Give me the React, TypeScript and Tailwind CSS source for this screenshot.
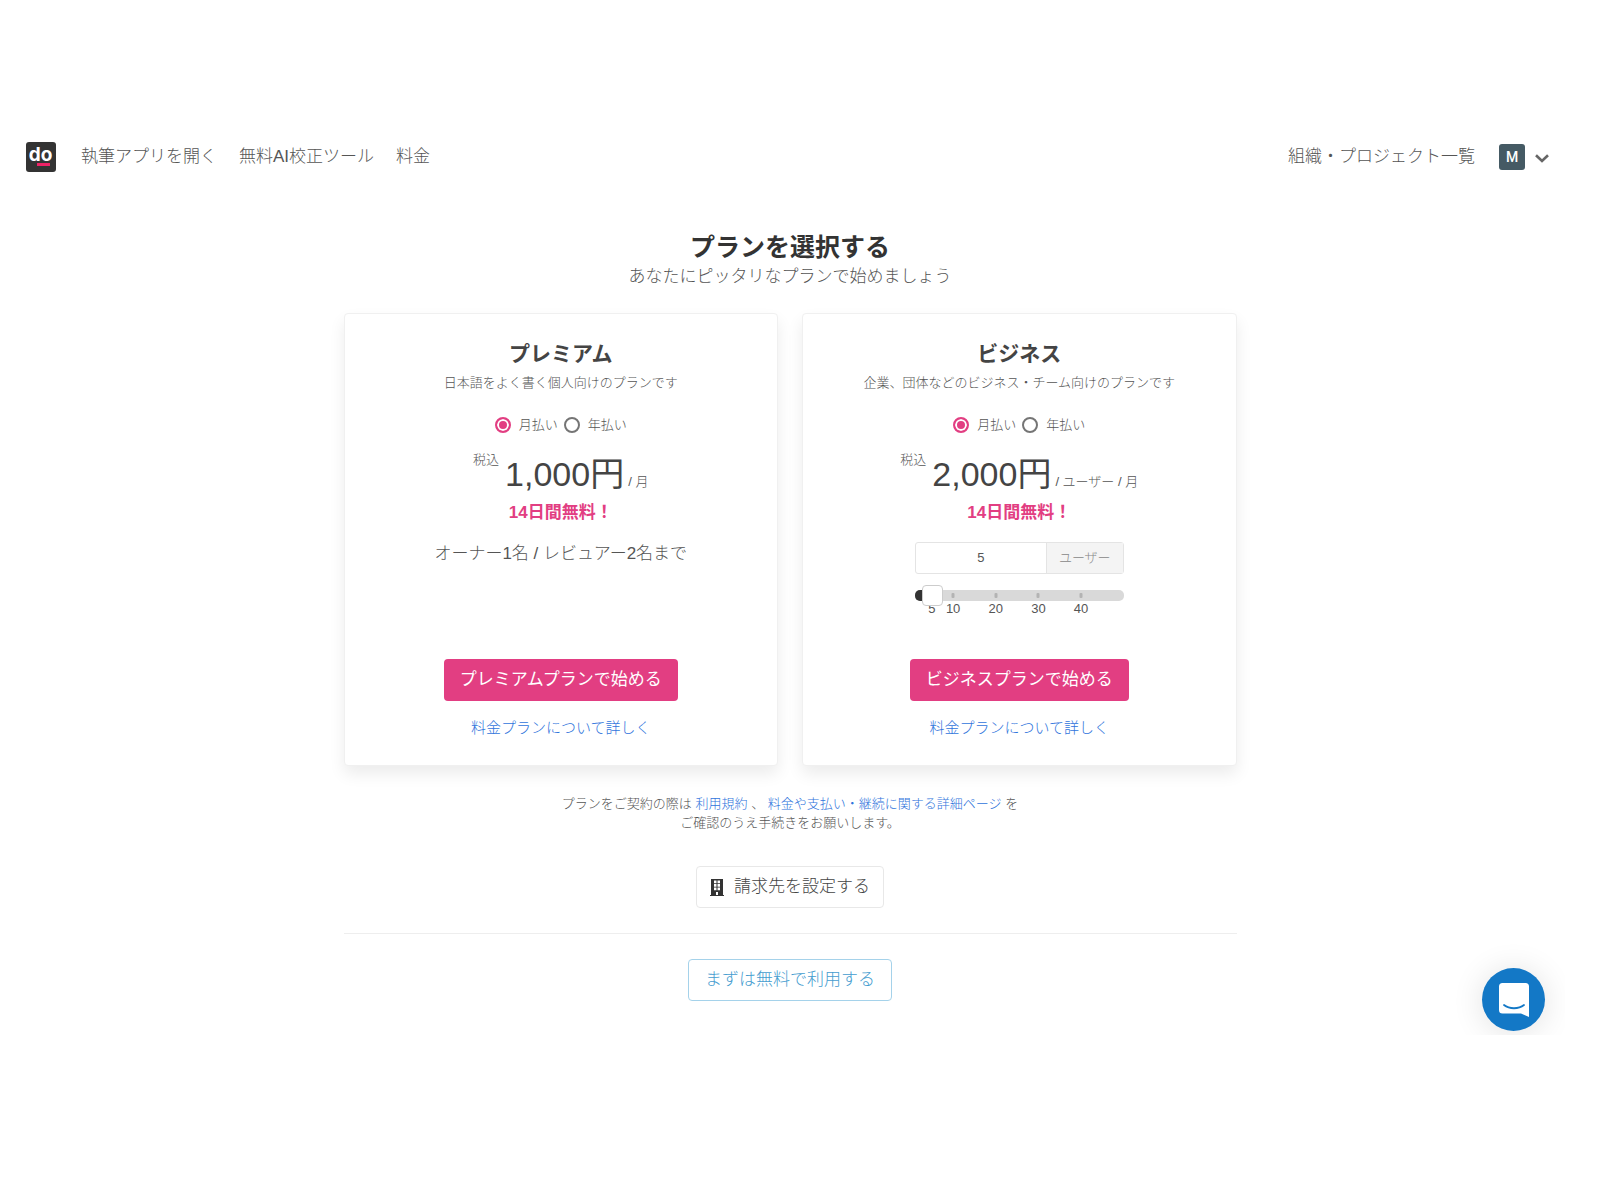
import { useState } from 'react';
import type { ReactNode } from 'react';

const MIN_USERS = 1;
const MAX_USERS = 50;
const TICKS = [10, 20, 30, 40];

function percent(value: number) {
  return `${((value - MIN_USERS) / (MAX_USERS - MIN_USERS)) * 100}%`;
}

function Logo() {
  return (
    <svg viewBox="0 0 30 30" className="size-[30px]" aria-hidden="true">
      <rect width="30" height="30" rx="3" fill="#333333" />
      <text x="14.5" y="19" textAnchor="middle" fontFamily="Inter, sans-serif" fontWeight="700" fontSize="19" fill="#ffffff">
        do
      </text>
      <rect x="11" y="21" width="13" height="3" fill="#ee2266" />
    </svg>
  );
}

function BuildingIcon() {
  return (
    <svg viewBox="0 0 14 17" className="h-[17px] w-[14px]" fill="#333333" aria-hidden="true">
      <path
        fillRule="evenodd"
        d="M1 0h12v16h1v1H0v-1h1zM4 1.500v2.700h2.500V1.500zM7.500 1.500v2.700H10V1.500zM4 5v2.700h2.500V5zM7.500 5v2.700H10V5zM4 8.500v2.700h2.500V8.500zM7.500 8.500v2.700H10V8.500zM6 13v3h2v-3z"
      />
    </svg>
  );
}

function Header() {
  return (
    <header className="flex h-[74px] items-center justify-between pr-[31px] pl-[26px]">
      <nav className="flex items-center gap-[22px]">
        <a href="#home" aria-label="do" className="mr-[3px]">
          <Logo />
        </a>
        <a href="#app">執筆アプリを開く</a>
        <a href="#proofreading">無料AI校正ツール</a>
        <a href="#pricing">料金</a>
      </nav>
      <div className="flex items-center gap-6">
        <a href="#projects">組織・プロジェクト一覧</a>
        <button type="button" aria-label="アカウント" className="flex items-center gap-[10px]">
          <span className="flex size-[26px] items-center justify-center rounded-[3px] bg-[#455a64] font-[Roboto,sans-serif] text-[14px] font-medium text-white">
            M
          </span>
          <svg viewBox="0 0 14 9" className="mt-0.5 h-[9px] w-[14px]" fill="none" stroke="#666666" strokeWidth="2.600" aria-hidden="true">
            <path d="M1 1.200L7 7l6-5.800" />
          </svg>
        </button>
      </div>
    </header>
  );
}

function BillingOptions({ name }: { name: string }) {
  const radio =
    'size-4 appearance-none rounded-full border-2 border-[#757575] bg-white checked:border-[#e23e82] checked:bg-[#e23e82] checked:shadow-[inset_0_0_0_2px_white]';
  return (
    <div className="mt-[22px] flex justify-center gap-[6px] text-[13px] leading-5">
      <label className="flex items-center gap-2">
        <input type="radio" name={name} value="monthly" defaultChecked className={radio} />
        月払い
      </label>
      <label className="flex items-center gap-2">
        <input type="radio" name={name} value="yearly" className={radio} />
        年払い
      </label>
    </div>
  );
}

function UserPicker() {
  const [users, setUsers] = useState(5);

  return (
    <div className="mx-auto w-[209px]">
      <div className="flex h-8 rounded-[3px] border border-[#e4e4e4] text-[13px]">
        <input
          type="text"
          aria-label="ユーザー数"
          value={users}
          onChange={(e) => setUsers(Number(e.target.value) || MIN_USERS)}
          className="min-w-0 flex-1 text-center outline-none"
        />
        <span className="flex w-[77px] items-center justify-center border-l border-[#e4e4e4] bg-[#f4f4f4] text-[#888888]">
          ユーザー
        </span>
      </div>
      <div className="relative mt-4 h-[11px] rounded-[5px] bg-[#d9d9d9]">
        <div className="h-full rounded-l-[5px] bg-[#333333]" style={{ width: percent(users) }} />
        {TICKS.map((tick) => (
          <span
            key={tick}
            className="absolute top-[3px] h-[5px] w-[3px] -translate-x-1/2 rounded-[1px] bg-[#b3b3b3]"
            style={{ left: percent(tick) }}
          />
        ))}
        {[users, ...TICKS].map((value, i) => (
          <span
            key={i}
            className="absolute top-[11px] -translate-x-1/2 text-[13px] leading-4"
            style={{ left: percent(value) }}
          >
            {value}
          </span>
        ))}
        <input
          type="range"
          aria-label="ユーザー数スライダー"
          min={MIN_USERS}
          max={MAX_USERS}
          value={users}
          onChange={(e) => setUsers(Number(e.target.value))}
          className="absolute -top-[5px] -left-[10px] h-[21px] w-[229px] cursor-pointer appearance-none bg-transparent [&::-webkit-slider-thumb]:size-[21px] [&::-webkit-slider-thumb]:appearance-none [&::-webkit-slider-thumb]:rounded-[4px] [&::-webkit-slider-thumb]:border [&::-webkit-slider-thumb]:border-[#cccccc] [&::-webkit-slider-thumb]:bg-white"
        />
      </div>
    </div>
  );
}

interface PlanCardProps {
  id: string;
  title: string;
  description: string;
  price: string;
  unit: string;
  children: ReactNode;
}

function PlanCard({ id, title, description, price, unit, children }: PlanCardProps) {
  return (
    <section className="flex min-h-[453px] flex-1 flex-col items-stretch rounded-[4px] border border-[#f0f0f0] bg-white pt-6 pb-[26px] text-center shadow-[0_8px_16px_rgba(10,10,10,0.08)]">
      <h2 className="text-[21px] leading-8 font-bold text-[#444444]">{title}</h2>
      <p className="mt-[3px] text-[13px] leading-5">{description}</p>
      <BillingOptions name={`${id}-billing`} />
      <div className="mt-[15px] flex items-baseline justify-center">
        <span className="mr-[6px] self-start text-[13px] leading-5">税込</span>
        <span className="text-[34px] leading-[48px] font-normal text-[#444444]">{price}</span>
        <span className="ml-1 text-[13px]">{unit}</span>
      </div>
      <p className="mt-[3px] leading-6 font-bold text-[#e23e82]">14日間無料！</p>
      <div className="mt-[17px] flex-1">{children}</div>
      <div>
        <button type="button" className="h-[42px] rounded-[4px] bg-[#e23e82] px-4 font-normal text-white">
          {title}プランで始める
        </button>
      </div>
      <a href="#plans" className="mx-auto mt-4 text-[15px] leading-[22px] text-[#2f74dc]">
        料金プランについて詳しく
      </a>
    </section>
  );
}

function ChatLauncher() {
  return (
    <div className="fixed right-[35px] bottom-[165px] overflow-hidden pt-10 pr-5 pb-1 pl-10">
      <button
        type="button"
        aria-label="チャットを開く"
        className="flex size-[63px] items-center justify-center rounded-full bg-[#1378c6] shadow-[0_2px_32px_rgba(0,0,0,0.12)]"
      >
        <svg viewBox="0 0 30 34" className="h-[34px] w-[30px]" aria-hidden="true">
          <path d="M3.500 0h23A3.500 3.500 0 0 1 30 3.500V34l-8-3.500H3.500A3.500 3.500 0 0 1 0 27V3.500A3.500 3.500 0 0 1 3.500 0z" fill="#ffffff" />
          <path d="M5 22c5.500 4.300 14.500 4.300 20 0" fill="none" stroke="#1378c6" strokeWidth="1.800" strokeLinecap="round" />
        </svg>
      </button>
    </div>
  );
}

export default function App() {
  return (
    <div className="min-h-screen bg-white pt-[120px] pr-5 font-['Liberation_Sans','Noto_Sans_CJK_JP',sans-serif] text-[17px] leading-6 font-light text-[#555555]">
      <Header />
      <main className="mx-auto flex max-w-[893px] flex-col items-center pt-[37px]">
        <h1 className="text-[25px] leading-8 font-bold text-[#333333]">プランを選択する</h1>
        <p className="mt-[2px]">あなたにピッタリなプランで始めましょう</p>

        <div className="mt-6 flex w-full gap-6">
          <PlanCard
            id="premium"
            title="プレミアム"
            description="日本語をよく書く個人向けのプランです"
            price="1,000円"
            unit="/ 月"
          >
            <p>オーナー1名 / レビュアー2名まで</p>
          </PlanCard>
          <PlanCard
            id="business"
            title="ビジネス"
            description="企業、団体などのビジネス・チーム向けのプランです"
            price="2,000円"
            unit="/ ユーザー / 月"
          >
            <UserPicker />
          </PlanCard>
        </div>

        <p className="mt-7 text-center text-[13px] leading-[19px]">
          プランをご契約の際は{' '}
          <a href="#terms" className="text-[#2f74dc]">利用規約</a> 、{' '}
          <a href="#billing-details" className="text-[#2f74dc]">料金や支払い・継続に関する詳細ページ</a> を
          <br />
          ご確認のうえ手続きをお願いします。
        </p>

        <button type="button" className="mt-[34px] flex h-[42px] items-center gap-[10px] rounded-[4px] border border-[#e8e8e8] px-[13px] text-[#444444]">
          <BuildingIcon />
          請求先を設定する
        </button>

        <hr className="mt-[25px] w-full border-[#eeeeee]" />

        <button type="button" className="mt-[25px] h-[42px] rounded-[4px] border border-[#a5d2ea] px-4 text-[#449ccf]">
          まずは無料で利用する
        </button>
      </main>
      <ChatLauncher />
    </div>
  );
}
